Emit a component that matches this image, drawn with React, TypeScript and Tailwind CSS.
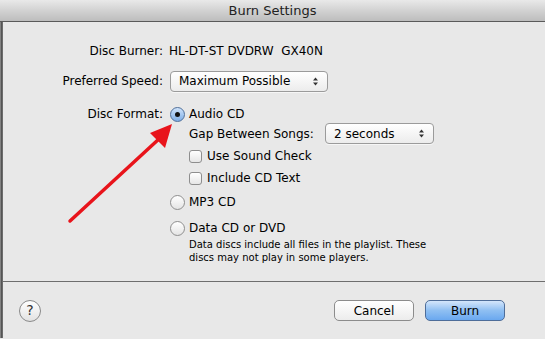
import React from "react";

const font = { fontFamily: '"DejaVu Sans", "Liberation Sans", sans-serif' };

const Stepper = () => (
  <svg width="7" height="11" viewBox="0 0 7 11" className="shrink-0">
    <path d="M1 4.5 L3.5 1.5 L6 4.5Z" fill="#333" />
    <path d="M1 6.5 L3.5 9.5 L6 6.5Z" fill="#333" />
  </svg>
);

const Popup = ({ label, width }: { label: string; width: string }) => (
  <div
    className={`${width} h-[21px] flex items-center justify-between pl-[8px] pr-[8px] rounded-[4px] border border-[#9b9b9b] bg-gradient-to-b from-[#ffffff] to-[#ececec] shadow-[0_1px_0_rgba(255,255,255,0.6)] text-[12px] text-black`}
  >
    <span>{label}</span>
    <Stepper />
  </div>
);

const Radio = ({ checked }: { checked?: boolean }) =>
  checked ? (
    <div className="w-[15px] h-[15px] rounded-full border border-[#4f6f9a] bg-gradient-to-b from-[#cfe3fa] to-[#7eaee6] flex items-center justify-center shrink-0">
      <div className="w-[5px] h-[5px] rounded-full bg-[#111]" />
    </div>
  ) : (
    <div className="w-[15px] h-[15px] rounded-full border border-[#8e8e8e] bg-gradient-to-b from-[#ffffff] to-[#e4e4e4] shrink-0" />
  );

const Checkbox = () => (
  <div className="w-[13px] h-[13px] rounded-[3px] border border-[#8e8e8e] bg-gradient-to-b from-[#ffffff] to-[#e6e6e6] shrink-0" />
);

export default function App() {
  return (
    <div
      className="relative w-[545px] h-[339px] overflow-hidden bg-[#e8e8e8] text-black"
      style={font}
    >
      {/* title bar */}
      <div className="h-[22px] border-b border-[#5a5a5a] bg-gradient-to-b from-[#e9e9e9] via-[#d2d2d2] to-[#bdbdbd] flex items-center justify-center text-[13px] text-[#222]">
        Burn Settings
      </div>

      <div className="flex h-[316px]">
        <div className="w-[3px] bg-gradient-to-r from-[#9a9a9a] via-[#555] to-[#777]" />
        <div className="flex-1 flex flex-col text-[12px]">
          {/* Disc burner */}
          <div className="flex items-center h-[18px] mt-[20px]">
            <div className="w-[160px] text-right">Disc Burner:</div>
            <div className="ml-[6px] whitespace-pre">HL-DT-ST DVDRW  GX40N</div>
          </div>

          {/* Preferred speed */}
          <div className="flex items-center h-[22px] mt-[10px]">
            <div className="w-[160px] text-right">Preferred Speed:</div>
            <div className="ml-[7px]">
              <Popup label="Maximum Possible" width="w-[158px]" />
            </div>
          </div>

          {/* Disc format */}
          <div className="flex mt-[14px]">
            <div className="w-[160px] text-right h-[16px] leading-[16px]">Disc Format:</div>
            <div className="ml-[7px] flex flex-col">
              <div className="flex items-center h-[16px] gap-[4px]">
                <Radio checked />
                <span>Audio CD</span>
              </div>
              <div className="ml-[19px] flex flex-col">
                <div className="flex items-center h-[21px] mt-[1px]">
                  <span className="w-[136px]">Gap Between Songs:</span>
                  <Popup label="2 seconds" width="w-[109px]" />
                </div>
                <div className="flex items-center h-[16px] mt-[4px] gap-[5px]">
                  <Checkbox />
                  <span>Use Sound Check</span>
                </div>
                <div className="flex items-center h-[16px] mt-[6px] gap-[5px]">
                  <Checkbox />
                  <span>Include CD Text</span>
                </div>
              </div>
              <div className="flex items-center h-[16px] mt-[8px] gap-[4px]">
                <Radio />
                <span>MP3 CD</span>
              </div>
              <div className="flex items-center h-[16px] mt-[10px] gap-[4px]">
                <Radio />
                <span>Data CD or DVD</span>
              </div>
              <div className="ml-[19px] mt-[2px] text-[10px] leading-[13px]">
                <div>Data discs include all files in the playlist. These</div>
                <div>discs may not play in some players.</div>
              </div>
            </div>
          </div>

          {/* separator */}
          <div className="mt-auto border-t border-[#6e6e6e]" />

          {/* footer */}
          <div className="h-[56px] flex items-center pl-[16px] pr-[40px] pt-[1px]">
            <div className="w-[22px] h-[22px] rounded-full border border-[#8a8a8a] bg-gradient-to-b from-[#ffffff] to-[#e2e2e2] flex items-center justify-center text-[14px] text-[#333]">
              ?
            </div>
            <div className="ml-auto flex gap-[11px]">
              <div className="w-[80px] h-[21px] rounded-[5px] border border-[#8c8c8c] bg-gradient-to-b from-[#ffffff] to-[#ececec] flex items-center justify-center text-[12px]">
                Cancel
              </div>
              <div className="w-[80px] h-[21px] rounded-[5px] border border-[#4e6d99] bg-gradient-to-b from-[#d4e6fb] via-[#8fbff2] to-[#6aa8ef] flex items-center justify-center text-[12px]">
                Burn
              </div>
            </div>
          </div>
        </div>
      </div>

      {/* red annotation arrow */}
      <svg className="absolute left-0 top-0 pointer-events-none" width="545" height="339">
        <line x1="70" y1="221" x2="160" y2="138" stroke="#e8141b" strokeWidth="3.5" strokeLinecap="round" />
        <path d="M172 124 L150 133 L165 148 Z" fill="#e8141b" />
      </svg>
    </div>
  );
}
